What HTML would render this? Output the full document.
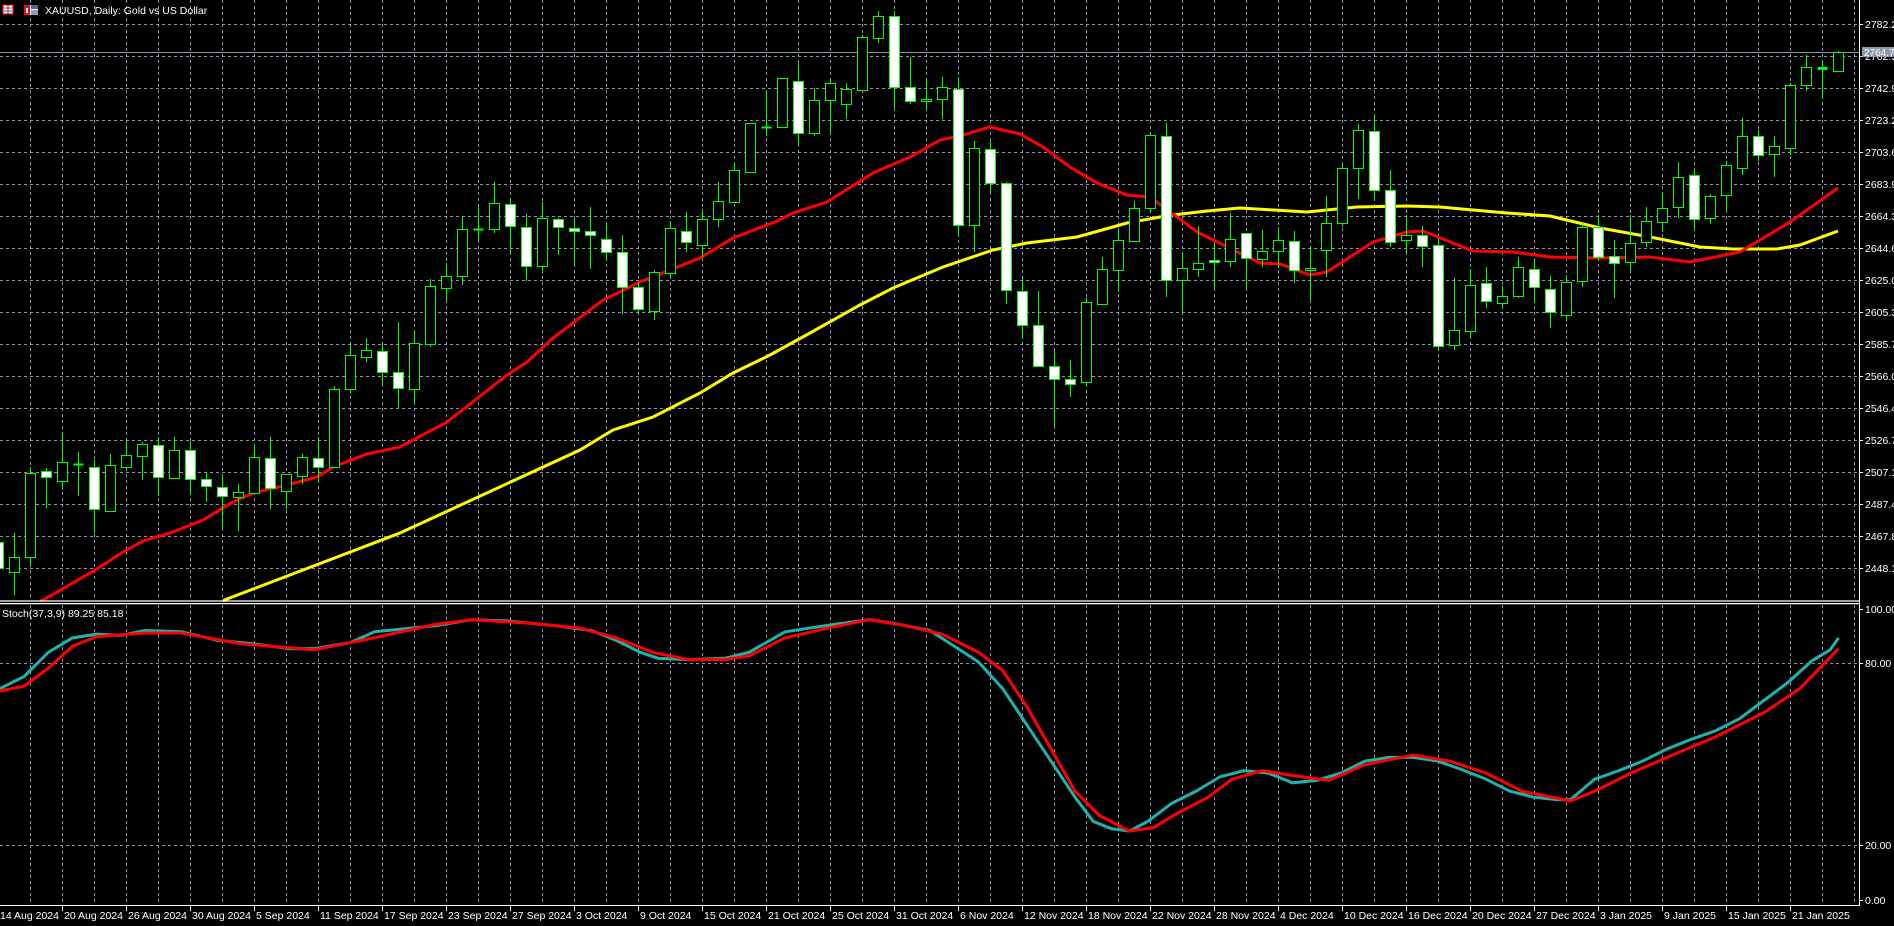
<!DOCTYPE html>
<html><head><meta charset="utf-8"><style>
html,body{margin:0;padding:0;background:#000;width:1894px;height:926px;overflow:hidden}
svg{display:block}
text{font-family:"Liberation Sans",sans-serif;font-size:10.5px;fill:#fff}
</style></head><body>
<svg id="s" width="1894" height="926" viewBox="0 0 1894 926" xmlns="http://www.w3.org/2000/svg">
<rect width="1894" height="926" fill="#000"/>
<g id="grid" stroke="#8a96a6" stroke-width="1" stroke-dasharray="3,3"></g>
<line x1="0" y1="52.5" x2="1859" y2="52.5" stroke="#8a96a6" stroke-width="1"/>
<g id="ma">
<polyline fill="none" stroke="#ffff00" stroke-width="3" points="223,601 227,599 400,533 580,450 613,430 653,417 700,393 733,373 770,355 810,333 860,305 893,288 943,267 993,250 1027,243 1077,237 1127,223 1160,217 1173,215 1207,211 1240,208 1307,212 1357,207 1407,206 1440,207 1473,210 1507,213 1550,216 1600,228 1650,237 1700,247 1733,249 1777,249 1800,245 1838,231"/>
<polyline fill="none" stroke="#ff0000" stroke-width="3" points="40,601 45,599 100,567 123,552 143,541 173,532 203,520 233,502 253,493 287,485 317,477 333,467 367,454 400,447 447,422 507,375 527,362 553,338 603,300 640,282 700,258 733,238 775,222 793,213 827,202 873,173 910,157 940,140 960,136 990,127 1020,134 1043,147 1070,167 1097,183 1127,195 1150,197 1197,232 1260,263 1280,264 1310,275 1327,272 1373,242 1407,232 1423,231 1473,251 1513,252 1550,257 1600,258 1650,257 1690,262 1740,252 1790,222 1838,188"/>
</g>
<g id="candles"></g>
<line x1="0" y1="601" x2="1859" y2="601" stroke="#fff" stroke-width="1.2"/>
<line x1="0" y1="603.6" x2="1859" y2="603.6" stroke="#fff" stroke-width="1.2"/>
<g transform="scale(1.208)" fill="none" stroke-width="2.5">
<polyline stroke="#20b2aa" points="0,570 20,560 40,540 60,528 80,525 100,526 120,522 150,523 180,530 210,533 240,537 260,537 290,532 310,523 330,521 360,518 390,513 420,514 440,516 460,518 490,522 510,530 530,540 545,545 570,546 600,545 620,540 650,523 690,517 720,513 740,516 770,522 790,535 810,548 830,570 850,600 870,630 890,660 905,680 920,686 935,688 950,680 970,665 990,655 1010,643 1030,638 1050,640 1070,648 1090,646 1110,640 1130,630 1150,627 1170,627 1190,630 1210,637 1230,645 1250,655 1270,660 1290,662 1300,662 1320,645 1340,638 1360,630 1380,620 1400,612 1420,605 1440,595 1460,580 1480,565 1500,547 1515,538 1522,528"/>
<polyline stroke="#ff0000" points="0,572 20,568 40,553 60,535 80,527 120,524 150,524 200,533 260,538 300,530 360,517 390,513 440,516 480,520 510,528 540,540 570,546 600,546 620,543 650,528 690,519 720,513 750,518 780,525 810,540 830,555 850,585 870,620 890,655 910,675 935,688 955,685 975,673 1000,660 1020,645 1045,638 1070,642 1100,646 1130,633 1170,625 1200,630 1230,640 1260,655 1300,663 1320,655 1350,640 1380,627 1420,610 1460,590 1490,570 1522,537"/>
</g>
<line x1="1859.5" y1="0" x2="1859.5" y2="906" stroke="#fff"/>
<line x1="0" y1="905.5" x2="1860" y2="905.5" stroke="#fff"/>
<g id="axis"></g>
<rect x="1862" y="47" width="32" height="10" fill="#8f9bab"/>
<text x="1864" y="56" style="font-size:10px">2764.7</text>
<g>
<rect x="3" y="5" width="10" height="9" fill="#fff" stroke="#e01010" stroke-width="1.2"/>
<line x1="8" y1="5" x2="8" y2="14" stroke="#e01010"/>
<line x1="4" y1="8" x2="12" y2="8" stroke="#3060b0"/><line x1="4" y1="11" x2="12" y2="11" stroke="#3060b0"/>
<rect x="24" y="5" width="14" height="10" fill="#fff"/>
<rect x="24" y="5" width="6" height="10" fill="#e01010"/><rect x="26" y="8" width="2" height="5" fill="#fff"/>
<rect x="31" y="5" width="7" height="4" fill="#4a6a90"/><rect x="31" y="10" width="7" height="5" fill="#8aa0c0"/>
<text x="45" y="14">XAUUSD, Daily:  Gold vs US Dollar</text>
<text x="2" y="617">Stoch(37,3,9) 89.25 85.18</text>
</g>
</svg>
<script>
var NS="http://www.w3.org/2000/svg";
function el(p,t,a){var e=document.createElementNS(NS,t);for(var k in a)e.setAttribute(k,a[k]);p.appendChild(e);return e;}
var g=document.getElementById('grid');
for(var k=0;k<=17;k++){var y=24+32*k+0.5;el(g,'line',{x1:0,y1:y,x2:1858,y2:y});}
el(g,'line',{x1:0,y1:663.5,x2:1858,y2:663.5});
el(g,'line',{x1:0,y1:845.5,x2:1858,y2:845.5});
for(var k=0;k<58;k++){var x=30+32*k+0.5;el(g,'line',{x1:x,y1:0,x2:x,y2:600});el(g,'line',{x1:x,y1:605,x2:x,y2:905});}
var ax=document.getElementById('axis');
var pl=["2782.20","2762.55","2742.90","2723.25","2703.60","2683.95","2664.30","2644.65","2625.00","2605.35","2585.70","2566.05","2546.40","2526.75","2507.10","2487.45","2467.80","2448.15"];
for(var i=0;i<pl.length;i++){var y=24+32*i;el(ax,'line',{x1:1859,y1:y+0.5,x2:1863,y2:y+0.5,stroke:'#fff'});var t=el(ax,'text',{x:1865,y:y+4});t.textContent=pl[i];}
[["100.00",609],["80.00",663],["20.00",845],["0.00",900]].forEach(function(a){el(ax,'line',{x1:1859,y1:a[1]+0.5,x2:1863,y2:a[1]+0.5,stroke:'#fff'});var t=el(ax,'text',{x:1865,y:a[1]+4});t.textContent=a[0];});
var dl=["14 Aug 2024","20 Aug 2024","26 Aug 2024","30 Aug 2024","5 Sep 2024","11 Sep 2024","17 Sep 2024","23 Sep 2024","27 Sep 2024","3 Oct 2024","9 Oct 2024","15 Oct 2024","21 Oct 2024","25 Oct 2024","31 Oct 2024","6 Nov 2024","12 Nov 2024","18 Nov 2024","22 Nov 2024","28 Nov 2024","4 Dec 2024","10 Dec 2024","16 Dec 2024","20 Dec 2024","27 Dec 2024","3 Jan 2025","9 Jan 2025","15 Jan 2025","21 Jan 2025"];
for(var i=0;i<dl.length;i++){var x=-2+64*i;el(ax,'line',{x1:x+0.5,y1:905,x2:x+0.5,y2:911,stroke:'#fff'});var t=el(ax,'text',{x:x+2,y:919});t.textContent=dl[i];}
var segs=[
[180,[[-1,0,1060,1085,1165,1190],[0,1,1060,1130,1175,1245],[1,1,862,880,1130,1158],[2,0,865,872,892,985],[3,1,758,847,902,930],[4,2,817,852,852,947],[5,0,840,860,988,1060],[6,1,822,856,992,992],[7,1,777,826,860,872],[8,1,785,793,827,900],[9,0,772,796,892,947],[10,1,772,811,893,897],[11,0,785,811,898,943],[12,0,877,898,919,965],[13,0,882,922,949,1048],[14,1,912,937,952,1052],[15,1,795,832,940,940],[16,0,772,835,925,988],[17,1,883,883,932,988],[18,1,823,832,887,912],[19,0,772,835,860,910],[20,1,618,628,860,860],[21,1,490,526,628,638],[22,1,475,511,532,547],[23,0,490,514,575,617]]],
[0,[[24,0,965,1115,1165,1225],[25,1,990,1030,1168,1208],[26,1,838,857,1033,1040],[27,1,790,827,865,902],[28,1,648,686,827,855],[29,2,617,686,686,723],[30,1,547,610,688,698],[31,0,597,613,677,760],[32,0,643,682,797,843],[33,1,607,655,797,812],[34,0,655,658,680,765],[35,0,657,683,692,793],[36,0,622,694,706,808],[37,0,667,716,757,782],[38,0,705,757,860,943],[39,0,845,860,928,940],[40,1,810,817,932,960],[41,1,663,685,820,832],[42,0,637,692,727,755],[43,1,628,658,734,772],[44,1,547,604,658,680],[45,1,487,511,607,607],[46,1,368,368,515,518],[47,2,273,381,381,408],
[48,1,235,235,380,383],[49,0,190,242,400,437],[50,1,265,301,400,407],[51,1,240,250,300,398],[52,1,250,268,313,357],[53,1,105,112,270,272],[54,1,33,49,115,128],[55,0,33,49,262,328],[56,0,170,262,304,313],[57,1,235,298,304,330],[58,1,232,262,298,357],[59,0,232,268,676,710],[60,1,423,445,676,755],[61,0,423,448,550,578],[62,0,545,550,870,913],[63,0,832,872,976,1017],[64,0,873,976,1099,1099],[65,0,1053,1099,1137,1280],[66,0,1080,1138,1153,1190],[67,1,893,907,1145,1158],[68,1,772,808,911,915],[69,1,690,721,811,875],[70,1,603,625,724,724],[71,1,396,406,625,636]]],
[60,[[72,0,190,229,661,710],[73,1,575,625,661,760],[74,1,498,610,628,652],[75,0,545,601,607,685],[76,1,460,538,604,620],[77,0,520,520,595,683],[78,1,510,574,598,620],[79,1,502,541,574,625],[80,0,513,544,630,670],[81,1,560,625,631,720],[82,1,408,490,571,650],[83,1,316,325,490,500],[84,1,192,211,325,418],[85,0,163,214,391,418],[86,0,330,391,547,562],[87,1,466,526,541,578],[88,0,498,526,559,622],[89,0,535,556,859,866],[90,1,655,811,856,871],[91,1,628,676,814,835],[92,0,622,670,724,745],[93,1,679,709,730,740],[94,1,591,622,709,715],[95,0,596,628,682,728],
[96,0,648,688,757,805],[97,1,646,667,766,778],[98,1,490,502,664,680],[99,0,466,502,592,604],[100,0,541,587,610,715],[101,1,466,550,607,632],[102,1,441,484,547,562],[103,1,397,445,487,515],[104,1,306,352,442,475],[105,0,325,346,478,508],[106,1,403,409,475,493],[107,1,304,316,406,452],[108,1,175,229,325,346],[109,0,211,229,286,304],[110,1,229,259,283,350],[111,1,70,76,265,286]]],
[0,[[112,1,165,202,256,272],[113,0,182,203,208,298],[114,1,153,157,214,214]]]
];
var cg=document.getElementById('candles');
segs.forEach(function(s){var oy=s[0];s[1].forEach(function(c){
 var x=14+16*c[0]+0.5;var f=function(v){return Math.round(oy+v/3);};
 var h=f(c[2]),t=f(c[3]),b=f(c[4]),l=f(c[5]);
 el(cg,'line',{x1:x,y1:h,x2:x,y2:l,stroke:'#00ff00','stroke-width':1});
 if(b-t<2){el(cg,'line',{x1:x-5,y1:t+0.5,x2:x+5,y2:t+0.5,stroke:'#00ff00','stroke-width':c[1]==0?3:2});}
 else el(cg,'rect',{x:x-5,y:t+0.5,width:10,height:b-t,fill:c[1]==0?'#fff':'#000',stroke:'#00ff00','stroke-width':1});
});});
</script>
</body></html>
